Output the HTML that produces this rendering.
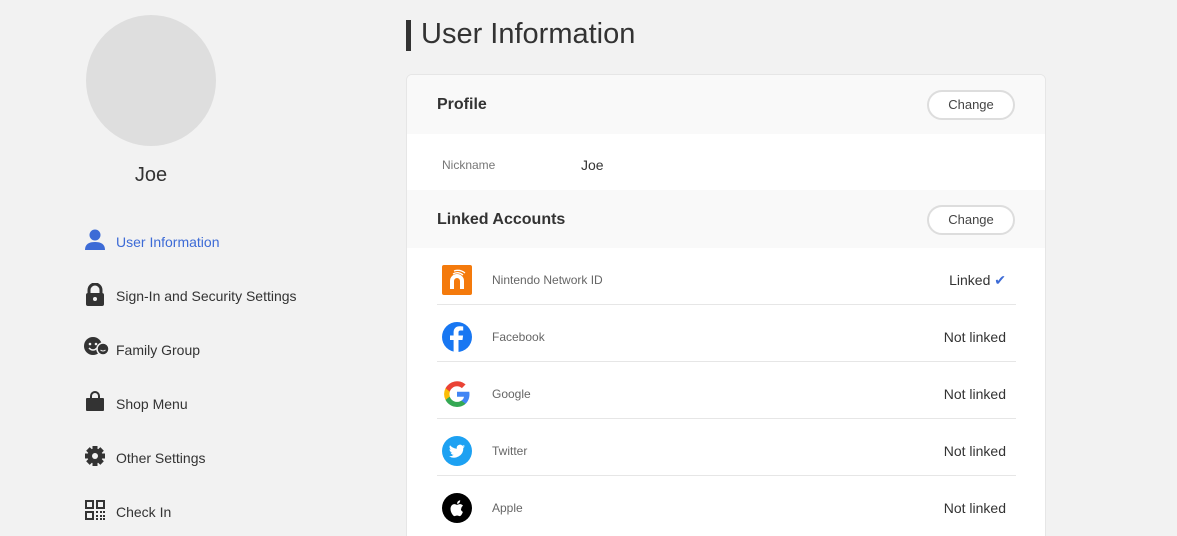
<!DOCTYPE html>
<html><head><meta charset="utf-8"><style>
*{margin:0;padding:0;box-sizing:border-box}
html,body{width:1177px;height:536px;overflow:hidden}
body{background:#f2f2f2;font-family:"Liberation Sans",Arial,sans-serif;color:#333;position:relative}
.av{position:absolute;left:86px;top:15px;width:130px;height:131px;border-radius:50%;background:#dedede}
.nm{position:absolute;left:86px;width:130px;top:164px;text-align:center;font-size:20px;color:#333}
.nav{position:absolute;left:84px;font-size:14px;color:#333;height:24px;line-height:24px}
.nav svg{position:absolute;left:0;top:0}
.nav span{position:absolute;left:32px;top:1px;white-space:nowrap}
.bar{position:absolute;left:406px;top:20px;width:5px;height:31px;background:#333}
.title{position:absolute;left:421px;top:18px;font-size:29px;color:#333}
.card{position:absolute;left:406px;top:74px;width:640px;height:480px;background:#fff;border:1px solid #e6e6e6;border-radius:6px;overflow:hidden}
.hd{position:absolute;left:0;width:100%;height:59px;background:#f9f9f9}
.hd b{position:absolute;left:30px;top:21px;font-size:16px;color:#333}
.btn{position:absolute;left:520px;top:15px;width:88px;height:30px;border:2px solid #ddd;border-radius:15px;background:#fff;font-size:13px;text-align:center;line-height:26px;color:#444}
.row{position:absolute;left:30px;width:579px;height:57px;border-bottom:1px solid #e6e6e6}
.row .ic{position:absolute;left:5px;top:17px;width:30px;height:30px}
.row .lb{position:absolute;left:55px;top:25px;font-size:12px;color:#666}
.row .st{position:absolute;right:10px;top:24px;font-size:14px;color:#333}
</style></head><body>
<div class="av"></div><div class="nm">Joe</div>

<div class="nav" style="top:229px;color:#3d6bd6"><svg width="22" height="22" viewBox="0 0 22 22"><circle cx="11" cy="6" r="5.5" fill="#3d6bd6"/><path d="M1 21c0-6 4-8 10-8s10 2 10 8z" fill="#3d6bd6"/></svg><span>User Information</span></div>
<div class="nav" style="top:283px"><svg width="22" height="24" viewBox="0 0 22 24"><path d="M5 10V7a6 6 0 0 1 12 0v3" stroke="#333" stroke-width="3" fill="none"/><rect x="2" y="10" width="18" height="13" rx="2" fill="#333"/><circle cx="11" cy="16" r="2" fill="#f2f2f2"/></svg><span>Sign-In and Security Settings</span></div>
<div class="nav" style="top:337px"><svg width="26" height="22" viewBox="0 0 26 22"><circle cx="9" cy="9" r="9" fill="#333"/><circle cx="6" cy="7" r="1.3" fill="#f2f2f2"/><circle cx="12" cy="7" r="1.3" fill="#f2f2f2"/><path d="M5 11q4 4 8 0" stroke="#f2f2f2" stroke-width="1.5" fill="none"/><circle cx="19" cy="12" r="6" fill="#333" stroke="#f2f2f2" stroke-width="1.5"/><path d="M16.5 13q2.5 2 5 0" stroke="#f2f2f2" stroke-width="1" fill="none"/></svg><span>Family Group</span></div>
<div class="nav" style="top:391px"><svg width="22" height="22" viewBox="0 0 22 22"><path d="M7 7V5a4 4 0 0 1 8 0v2" stroke="#333" stroke-width="2" fill="none"/><rect x="2" y="7" width="18" height="13" rx="1" fill="#333"/></svg><span>Shop Menu</span></div>
<div class="nav" style="top:445px"><svg width="22" height="22" viewBox="0 0 22 22"><g fill="#333" transform="translate(11 11)"><rect x="-2.5" y="-10" width="5" height="20"/><rect x="-2.5" y="-10" width="5" height="20" transform="rotate(45)"/><rect x="-2.5" y="-10" width="5" height="20" transform="rotate(90)"/><rect x="-2.5" y="-10" width="5" height="20" transform="rotate(135)"/><circle r="7.5"/></g><circle cx="11" cy="11" r="3" fill="#f2f2f2"/></svg><span>Other Settings</span></div>
<div class="nav" style="top:499px"><svg width="22" height="22" viewBox="0 0 22 22" fill="#333"><path d="M1 1h9v9H1zM3 3v5h5V3zM12 1h9v9h-9zM14 3v5h5V3zM1 12h9v9H1zM3 14v5h5v-5z" fill-rule="evenodd"/><rect x="12" y="12" width="2" height="2"/><rect x="16" y="12" width="2" height="2"/><rect x="19" y="12" width="2" height="2"/><rect x="12" y="16" width="2" height="2"/><rect x="16" y="16" width="2" height="2"/><rect x="19" y="16" width="2" height="2"/><rect x="12" y="19" width="2" height="2"/><rect x="16" y="19" width="2" height="2"/><rect x="19" y="19" width="2" height="2"/></svg><span>Check In</span></div>

<div class="bar"></div><div class="title">User Information</div>
<div class="card">
<div class="hd" style="top:0"><b>Profile</b><div class="btn">Change</div></div>
<div style="position:absolute;left:35px;top:83px;font-size:12px;color:#777">Nickname</div>
<div style="position:absolute;left:174px;top:82px;font-size:14px;color:#333">Joe</div>
<div class="hd" style="top:115px;height:58px"><b>Linked Accounts</b><div class="btn">Change</div></div>
<div class="row" style="top:173px"><svg class="ic" viewBox="0 0 30 30"><rect width="30" height="30" rx="2" fill="#f47a0c"/><path d="M10 24V16a5 5 0 0 1 10 0v8" stroke="#fff" stroke-width="4" fill="none"/><path d="M11 9q5-3 10 1M12 6q6-2 11 2" stroke="#fff" stroke-width="1.3" fill="none"/></svg><div class="lb">Nintendo Network ID</div><div class="st">Linked <span style="color:#3d6bd6">✔</span></div></div>
<div class="row" style="top:230px"><svg class="ic" viewBox="0 0 30 30"><circle cx="15" cy="15" r="15" fill="#1877f2"/><path d="M16.5 30V18h4l.6-4.5h-4.6v-2.8c0-1.3.4-2.2 2.2-2.2h2.5V4.5c-.4 0-1.9-.2-3.6-.2-3.6 0-6 2.2-6 6.2v3H8v4.5h3.6V30z" fill="#fff"/></svg><div class="lb">Facebook</div><div class="st">Not linked</div></div>
<div class="row" style="top:287px"><svg class="ic" viewBox="0 0 30 30"><path d="M27.5 15.3c0-.9-.1-1.8-.2-2.6H15v5h7a6 6 0 0 1-2.6 3.9v3.2h4.2c2.5-2.3 3.9-5.6 3.9-9.5z" fill="#4285f4"/><path d="M15 28c3.5 0 6.4-1.2 8.6-3.2l-4.2-3.2c-1.2.8-2.7 1.3-4.4 1.3-3.4 0-6.2-2.3-7.2-5.3H3.5v3.3A13 13 0 0 0 15 28z" fill="#34a853"/><path d="M7.8 17.6a7.8 7.8 0 0 1 0-5V9.3H3.5a13 13 0 0 0 0 11.6z" fill="#fbbc05"/><path d="M15 7.2c1.9 0 3.6.7 4.9 1.9l3.7-3.7A13 13 0 0 0 3.5 9.3l4.3 3.3c1-3 3.8-5.4 7.2-5.4z" fill="#ea4335"/></svg><div class="lb">Google</div><div class="st">Not linked</div></div>
<div class="row" style="top:344px"><svg class="ic" viewBox="0 0 30 30"><circle cx="15" cy="15" r="15" fill="#1da1f2"/><path d="M23 10.2c-.6.3-1.2.4-1.9.5.7-.4 1.2-1 1.4-1.8-.6.4-1.3.6-2.1.8a3.3 3.3 0 0 0-5.6 3A9.3 9.3 0 0 1 8 9.3a3.3 3.3 0 0 0 1 4.4c-.5 0-1-.2-1.5-.4 0 1.6 1.1 2.9 2.6 3.2-.5.1-1 .2-1.5.1.4 1.3 1.600 2.3 3.1 2.3A6.6 6.6 0 0 1 7 20.2a9.3 9.3 0 0 0 14.3-8.300c.7-.5 1.2-1 1.700-1.700z" fill="#fff"/></svg><div class="lb">Twitter</div><div class="st">Not linked</div></div>
<div class="row" style="top:401px;border:none"><svg class="ic" viewBox="0 0 30 30"><circle cx="15" cy="15" r="15" fill="#000"/><path d="M19.3 15.7c0-2 1.6-2.9 1.7-3-1-1.4-2.4-1.6-2.9-1.6-1.2-.1-2.4.7-3 .7s-1.600-.7-2.600-.7c-1.4 0-2.6.8-3.3 2-1.4 2.4-.4 6 1 8 .7 1 1.4 2 2.4 2s1.3-.6 2.5-.6 1.5.6 2.5.6 1.7-1 2.3-2c.7-1.1 1-2.2 1-2.3-.1 0-2-.8-2-3.1zM17.4 9.7c.5-.7.9-1.6.8-2.5-.8 0-1.700.5-2.300 1.2-.5.6-.9 1.5-.8 2.4.9.1 1.800-.4 2.300-1.100z" fill="#fff"/></svg><div class="lb">Apple</div><div class="st">Not linked</div></div>
</div>
</body></html>
